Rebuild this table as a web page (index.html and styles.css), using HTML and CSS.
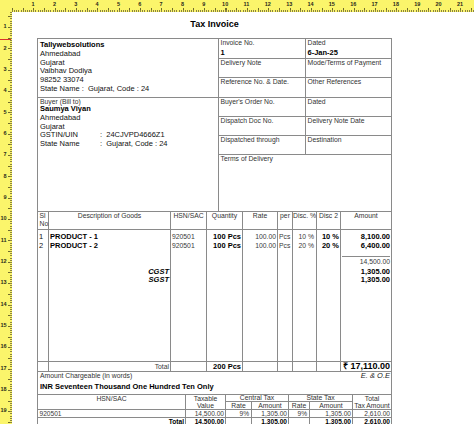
FILE: index.html
```html
<!DOCTYPE html>
<html lang="en">
<head>
<meta charset="utf-8">
<title>Tax Invoice</title>
<link rel="stylesheet" href="styles.css">
</head>
<body>
<div class="screen">
  <div class="corner"></div>
  <div class="ruler-top">
    <span>1</span><span>2</span><span>3</span><span>4</span><span>5</span><span>6</span><span>7</span><span>8</span><span>9</span><span>10</span><span>11</span><span>12</span><span>13</span><span>14</span><span>15</span><span>16</span><span>17</span><span>18</span><span>19</span><span>20</span><span>21</span>
  </div>
  <div class="ruler-left">
    <div class="margin-mark"></div>
    <span>1</span><span>2</span><span>3</span><span>4</span><span>5</span><span>6</span><span>7</span><span>8</span><span>9</span><span>10</span><span>11</span><span>12</span><span>13</span><span>14</span><span>15</span><span>16</span><span>17</span><span>18</span><span>19</span>
  </div>
  <div class="page">
    <h1 class="title">Tax Invoice</h1>
    <div class="invoice">
      <section class="top">
        <div class="cell seller">
          <p class="b">Tallywebsolutions</p>
          <p>Ahmedabad</p>
          <p>Gujarat</p>
          <p>Vaibhav Dodiya</p>
          <p>98252 33074</p>
          <p>State Name :&nbsp; Gujarat, Code : 24</p>
        </div>
        <div class="cell"><p class="lbl">Invoice No.</p><p class="val">1</p></div>
        <div class="cell"><p class="lbl">Dated</p><p class="val">6-Jan-25</p></div>
        <div class="cell"><p class="lbl">Delivery Note</p></div>
        <div class="cell"><p class="lbl">Mode/Terms of Payment</p></div>
        <div class="cell"><p class="lbl">Reference No. &amp; Date.</p></div>
        <div class="cell"><p class="lbl">Other References</p></div>
        <div class="cell buyer">
          <p class="lbl">Buyer (Bill to)</p>
          <p class="b">Saumya Viyan</p>
          <p>Ahmedabad</p>
          <p>Gujarat</p>
          <p class="kv"><span class="k">GSTIN/UIN</span><span>:&nbsp; 24CJVPD4666Z1</span></p>
          <p class="kv"><span class="k">State Name</span><span>:&nbsp; Gujarat, Code : 24</span></p>
        </div>
        <div class="cell"><p class="lbl">Buyer's Order No.</p></div>
        <div class="cell"><p class="lbl">Dated</p></div>
        <div class="cell"><p class="lbl">Dispatch Doc No.</p></div>
        <div class="cell"><p class="lbl">Delivery Note Date</p></div>
        <div class="cell"><p class="lbl">Dispatched through</p></div>
        <div class="cell"><p class="lbl">Destination</p></div>
        <div class="cell terms"><p class="lbl">Terms of Delivery</p></div>
      </section>

      <section class="items">
        <div class="hd left">Sl<br>No.</div>
        <div class="hd">Description of Goods</div>
        <div class="hd">HSN/SAC</div>
        <div class="hd">Quantity</div>
        <div class="hd">Rate</div>
        <div class="hd">per</div>
        <div class="hd">Disc. %</div>
        <div class="hd">Disc 2</div>
        <div class="hd">Amount</div>

        <div class="col"><p>1</p><p>2</p></div>
        <div class="col">
          <p class="b">PRODUCT - 1</p>
          <p class="b">PRODUCT - 2</p>
          <p class="b i r tax-first">CGST</p>
          <p class="b i r">SGST</p>
        </div>
        <div class="col"><p class="sm">920501</p><p class="sm">920501</p></div>
        <div class="col r"><p class="b">100 Pcs</p><p class="b">100 Pcs</p></div>
        <div class="col r"><p class="sm">100.00</p><p class="sm">100.00</p></div>
        <div class="col"><p class="sm">Pcs</p><p class="sm">Pcs</p></div>
        <div class="col r pr2"><p class="sm">10 %</p><p class="sm">20 %</p></div>
        <div class="col r"><p class="b">10 %</p><p class="b">20 %</p></div>
        <div class="col r">
          <p class="b">8,100.00</p>
          <p class="b">6,400.00</p>
          <p class="sm subtotal">14,500.00</p>
          <p class="b tax-amt">1,305.00</p>
          <p class="b">1,305.00</p>
        </div>

        <div class="tot"></div>
        <div class="tot r"><span class="sm">Total</span></div>
        <div class="tot"></div>
        <div class="tot r"><span class="b">200 Pcs</span></div>
        <div class="tot"></div>
        <div class="tot"></div>
        <div class="tot"></div>
        <div class="tot"></div>
        <div class="tot r grand">₹ 17,110.00</div>
      </section>

      <section class="words">
        <div class="words-top"><span class="lbl">Amount Chargeable (in words)</span><span class="eoe">E. &amp; O.E</span></div>
        <p class="b inr">INR Seventeen Thousand One Hundred Ten Only</p>
      </section>

      <section class="hsn">
        <div class="h hsn-code">HSN/SAC</div>
        <div class="h span2">Taxable<br>Value</div>
        <div class="h ctax">Central Tax</div>
        <div class="h stax">State Tax</div>
        <div class="h span2 ttax">Total<br>Tax Amount</div>
        <div class="h">Rate</div>
        <div class="h">Amount</div>
        <div class="h">Rate</div>
        <div class="h">Amount</div>

        <div class="d left">920501</div>
        <div class="d">14,500.00</div>
        <div class="d rate">9%</div>
        <div class="d">1,305.00</div>
        <div class="d rate">9%</div>
        <div class="d">1,305.00</div>
        <div class="d">2,610.00</div>

        <div class="d b">Total</div>
        <div class="d b">14,500.00</div>
        <div class="d"></div>
        <div class="d b">1,305.00</div>
        <div class="d"></div>
        <div class="d b">1,305.00</div>
        <div class="d b">2,610.00</div>
      </section>
    </div>
  </div>
</div>
</body>
</html>
```

FILE: styles.css
```css
* { box-sizing: border-box; margin: 0; padding: 0; }

html, body { background: #ffffff; }

body {
  margin: 0;
  font-family: "Liberation Sans", Arial, sans-serif;
  font-size: 7.5px;
  color: #111;
}

.screen {
  width: 474px;
  height: 424px;
  overflow: hidden;
  display: grid;
  grid-template-columns: 12px 462px;
  grid-template-rows: 12px 412px;
  background: #fff;
}

/* ---------- rulers ---------- */
.corner { background: #fbf56b; }

.ruler-top {
  display: flex;
  padding-left: 10.4px;
  background:
    repeating-linear-gradient(90deg, #8b8440 0 1px, transparent 1px 2.135px) 0 100% / 100% 2px no-repeat,
    repeating-linear-gradient(90deg, #6f6a2c 0 1px, transparent 1px 10.675px) 0 100% / 100% 4px no-repeat,
    #fbf56b;
}

.ruler-top span {
  flex: none;
  width: 21.35px;
  text-align: center;
  font-weight: bold;
  font-size: 5.5px;
  line-height: 8px;
  color: #2a2a1a;
}

.ruler-left {
  position: relative;
  display: flex;
  flex-direction: column;
  padding-top: 4.3px;
  background:
    repeating-linear-gradient(180deg, #8b8440 0 1px, transparent 1px 2.135px) 100% -6.4px / 2px 440px no-repeat,
    repeating-linear-gradient(180deg, #6f6a2c 0 1px, transparent 1px 10.675px) 100% -6.4px / 4px 440px no-repeat,
    #fbf56b;
}

.ruler-left span {
  flex: none;
  height: 21.35px;
  line-height: 21.35px;
  width: 6.5px;
  text-align: right;
  font-weight: bold;
  font-size: 5.5px;
  color: #2a2a1a;
  white-space: nowrap;
}

.margin-mark {
  position: absolute;
  left: 0;
  top: 27px;
  width: 11px;
  height: 1px;
  background: #d8322b;
}

/* ---------- page ---------- */
.page {
  padding: 6px 0 0 25px;
}

.title {
  width: 355px;
  text-align: center;
  font-size: 9px;
  line-height: 12px;
  font-weight: bold;
  color: #000;
  margin-bottom: 8px;
}

.invoice {
  width: 355px;
  background: #8a8a8a;
  padding: 1px;
  display: flex;
  flex-direction: column;
  gap: 1px;
}

.b { font-weight: bold; color: #000; }
.i { font-style: italic; }
.r { text-align: right; }
.sm { font-size: 6.8px; color: #3a3a3a; }

.lbl {
  font-size: 6.8px;
  line-height: 7px;
  color: #333;
}

/* ---------- top block ---------- */
.top {
  display: grid;
  grid-template-columns: 180px 86px 85px;
  grid-template-rows: 19px 18px 19px 18px 18px 18px 56px;
  gap: 1px;
}

.cell {
  background: #fff;
  padding-left: 1.5px;
  overflow: hidden;
  white-space: nowrap;
}

.seller {
  grid-column: 1;
  grid-row: 1 / span 3;
  padding: 2px 0 0 2px;
  line-height: 8.8px;
}

.buyer {
  grid-column: 1;
  grid-row: 4 / span 4;
  padding-left: 2px;
  line-height: 8.8px;
}

.terms { grid-column: 2 / span 2; }

.val {
  margin-top: 2px;
  line-height: 9px;
  font-weight: bold;
  color: #000;
}

.kv { display: flex; }
.kv .k { width: 60px; flex: none; }

/* ---------- items ---------- */
.items {
  display: grid;
  grid-template-columns: 10px 121px 35px 35px 34px 14px 23px 23px 50px;
  grid-template-rows: 17px 131px 9px;
  gap: 1px;
}

.hd {
  background: #fff;
  text-align: center;
  font-size: 6.8px;
  line-height: 8px;
  color: #333;
  white-space: nowrap;
}

.hd.left { text-align: left; padding-left: 1.5px; }

.col {
  background: #fff;
  padding: 3px 1px 0 1px;
  line-height: 8.8px;
  white-space: nowrap;
}

.col.pr2 { padding-right: 2px; }

.tax-first { margin-top: 17px; }

.subtotal {
  margin-top: 5px;
  border-top: 1px solid #8a8a8a;
  line-height: 9px;
}

.tax-amt { margin-top: 2px; }

.tot {
  background: #fff;
  padding: 0 1px;
  line-height: 9px;
  white-space: nowrap;
}

.grand {
  font-weight: bold;
  font-size: 9px;
  color: #000;
  line-height: 9px;
}

/* ---------- words ---------- */
.words {
  background: #fff;
  padding: 0 1px 3px 2px;
}

.words-top {
  display: flex;
  justify-content: space-between;
  line-height: 8px;
}

.eoe { font-style: italic; color: #222; }

.inr {
  margin-top: 2px;
  line-height: 9px;
}

/* ---------- hsn summary ---------- */
.hsn {
  display: grid;
  grid-template-columns: 147px 39px 25px 36px 20px 42px 38px;
  grid-template-rows: 6px 7px 7px 8px;
  gap: 1px;
  font-size: 6.6px;
}

.hsn .h {
  background: #fff;
  text-align: center;
  line-height: 7px;
  font-size: 6.8px;
  color: #333;
  white-space: nowrap;
  overflow: visible;
}

.hsn .hsn-code { grid-column: 1; grid-row: 1 / span 2; }
.hsn .span2 { grid-row: 1 / span 2; }
.hsn .ctax { grid-column: 3 / span 2; line-height: 6px; }
.hsn .stax { grid-column: 5 / span 2; line-height: 6px; }
.hsn .ttax { grid-column: 7; }

.hsn .d {
  background: #fff;
  text-align: right;
  padding: 0 1px;
  line-height: 7px;
  color: #3a3a3a;
  white-space: nowrap;
}

.hsn .d.left { text-align: left; padding-left: 1.5px; }
.hsn .d.rate { padding-right: 2px; }
.hsn .d.b { color: #000; line-height: 8px; }
```
